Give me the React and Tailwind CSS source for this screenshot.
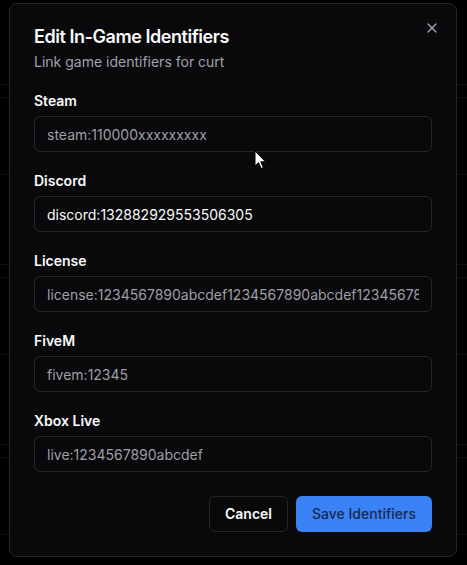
import React from "react";

const fields = [
  { id: "steam", label: "Steam", placeholder: "steam:110000xxxxxxxxx", value: "" },
  { id: "discord", label: "Discord", placeholder: "discord:", value: "discord:132882929553506305" },
  {
    id: "license",
    label: "License",
    placeholder: "license:1234567890abcdef1234567890abcdef1234567890",
    value: "",
  },
  { id: "fivem", label: "FiveM", placeholder: "fivem:12345", value: "" },
  { id: "xbl", label: "Xbox Live", placeholder: "live:1234567890abcdef", value: "" },
];

// faint table rows of the page behind the overlay
const BackdropRows = () => (
  <div className="absolute inset-0 overflow-hidden">
    {[0, 1, 2, 3].map((i) => (
      <div key={i} className="h-[180px] relative">
        <div className="absolute left-0 right-0 top-[84px] h-px bg-[#101012]" />
        <div className="absolute left-0 right-0 top-[97px] h-px bg-[#101012]" />
        <div className="absolute left-0 right-0 top-[174px] h-px bg-[#0d0d0f]" />
      </div>
    ))}
  </div>
);

const Cursor = () => (
  <svg
    className="absolute left-[254px] top-[150px] pointer-events-none"
    width="13"
    height="20"
    viewBox="0 0 13 20"
  >
    <path
      d="M1 1 L1 16 L4.5 12.6 L7.2 18.6 L9.4 17.6 L6.8 11.8 L11.6 11.8 Z"
      fill="#ffffff"
      stroke="#000000"
      strokeWidth="1"
      strokeLinejoin="round"
    />
  </svg>
);

export default function App() {
  return (
    <div
      className="relative w-[467px] h-[565px] bg-black overflow-hidden"
      style={{ fontFamily: "Inter, 'Noto Sans', sans-serif" }}
    >
      <BackdropRows />

      <div className="relative pt-[3px] pl-[9px]">
        <div className="relative w-[448px] rounded-lg border border-[#27272a] bg-[#09090b] p-6 text-[#fafafa]">
          <button className="absolute right-4 top-4 text-[#a1a1aa]">
            <svg width="16" height="16" viewBox="0 0 24 24" fill="none" stroke="currentColor" strokeWidth="2" strokeLinecap="round">
              <path d="M18 6 6 18" />
              <path d="m6 6 12 12" />
            </svg>
          </button>

          <div className="flex flex-col gap-1.5">
            <h2 className="text-lg font-semibold leading-none tracking-tight">Edit In-Game Identifiers</h2>
            <p className="text-sm text-[#a1a1aa]">Link game identifiers for curt</p>
          </div>

          <div className="mt-[22px] flex flex-col gap-[22px]">
            {fields.map((f) => (
              <div key={f.id} className="flex flex-col gap-2">
                <label className="text-sm font-semibold leading-none">{f.label}</label>
                <input
                  readOnly
                  defaultValue={f.value}
                  placeholder={f.placeholder}
                  className="h-9 w-full rounded-md border border-[#27272a] bg-transparent px-3 text-sm text-[#fafafa] placeholder:text-[#9f9fa6] outline-none"
                />
              </div>
            ))}
          </div>

          <div className="mt-6 flex justify-end gap-2">
            <button className="h-9 w-[79px] rounded-md border border-[#27272a] bg-[#09090b] text-sm font-semibold text-[#fafafa]">
              Cancel
            </button>
            <button className="h-9 w-[136px] rounded-md bg-[#3b82f6] text-sm font-medium text-[#172a4f]">
              Save Identifiers
            </button>
          </div>
        </div>
      </div>

      <Cursor />
    </div>
  );
}
